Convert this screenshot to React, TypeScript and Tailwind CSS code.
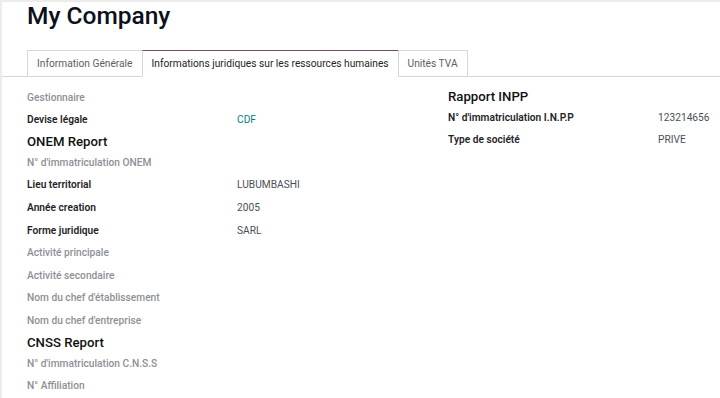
import React from 'react';

type Field = { label: string; value?: string; strong?: boolean; link?: boolean };
type Item = { heading: string } | Field;

const leftItems: Item[] = [
  { label: 'Gestionnaire' },
  { label: 'Devise légale', value: 'CDF', strong: true, link: true },
  { heading: 'ONEM Report' },
  { label: "N° d'immatriculation ONEM" },
  { label: 'Lieu territorial', value: 'LUBUMBASHI', strong: true },
  { label: 'Année creation', value: '2005', strong: true },
  { label: 'Forme juridique', value: 'SARL', strong: true },
  { label: 'Activité principale' },
  { label: 'Activité secondaire' },
  { label: "Nom du chef d'établissement" },
  { label: "Nom du chef d'entreprise" },
  { heading: 'CNSS Report' },
  { label: "N° d'immatriculation C.N.S.S" },
  { label: 'N° Affiliation' },
];

const rightItems: Item[] = [
  { heading: 'Rapport INPP' },
  { label: "N° d'immatriculation I.N.P.P", value: '123214656', strong: true },
  { label: 'Type de société', value: 'PRIVE', strong: true },
];

const Row = ({ item }: { item: Item }) => {
  if ('heading' in item) {
    return (
      <div className="h-[20px] pt-[2px] flex items-center text-[13.2px] font-medium text-[#111]">
        {item.heading}
      </div>
    );
  }
  return (
    <div className="h-[22.6px] flex items-center text-[10.2px]">
      <div
        className={
          'w-[210px] shrink-0 ' +
          (item.strong ? 'font-semibold text-[#1f2328]' : 'font-medium text-[#8d9096]')
        }
      >
        {item.label}
      </div>
      {item.value && (
        <div className={item.link ? 'text-[#017e84]' : 'text-[#4a5058]'}>{item.value}</div>
      )}
    </div>
  );
};

const App = () => {
  const tabs = ['Information Générale', 'Informations juridiques sur les ressources humaines', 'Unités TVA'];
  return (
    <div
      className="w-[720px] h-[398px] overflow-hidden bg-white border-l-2 border-t-2 border-l-[#ececec] border-t-[#ececec]"
      style={{ fontFamily: 'Roboto, "Noto Sans", sans-serif' }}
    >
      {/* Title */}
      <div className="pl-[25px] h-[29px] flex items-center">
        <h1 className="text-[24.5px] font-medium text-[#0d0f1a] leading-none">My Company</h1>
      </div>

      {/* Tabs */}
      <div className="mt-[19px] flex pl-[25px] border-b border-[#d5d7da] h-[27px]">
        {tabs.map((t, i) => (
          <div
            key={t}
            className={
              'px-[9px] h-[27px] flex items-center text-[10.2px] border-x -mb-px ' +
              (i === 1
                ? 'bg-white border-[#d5d7da] border-t border-t-[#714b67] border-b border-b-white text-[#1f2328]'
                : 'border-t border-[#d5d7da] text-[#5b6068]') +
              (i > 0 ? ' -ml-px' : '')
            }
          >
            {t}
          </div>
        ))}
      </div>

      {/* Form body */}
      <div className="pl-[25px] pt-[9px] grid grid-cols-[421px_1fr]">
        <div className="flex flex-col">
          {leftItems.map((it, i) => (
            <Row key={i} item={it} />
          ))}
        </div>
        <div className="flex flex-col">
          {rightItems.map((it, i) => (
            <Row key={i} item={it} />
          ))}
        </div>
      </div>
    </div>
  );
};

export default App;
